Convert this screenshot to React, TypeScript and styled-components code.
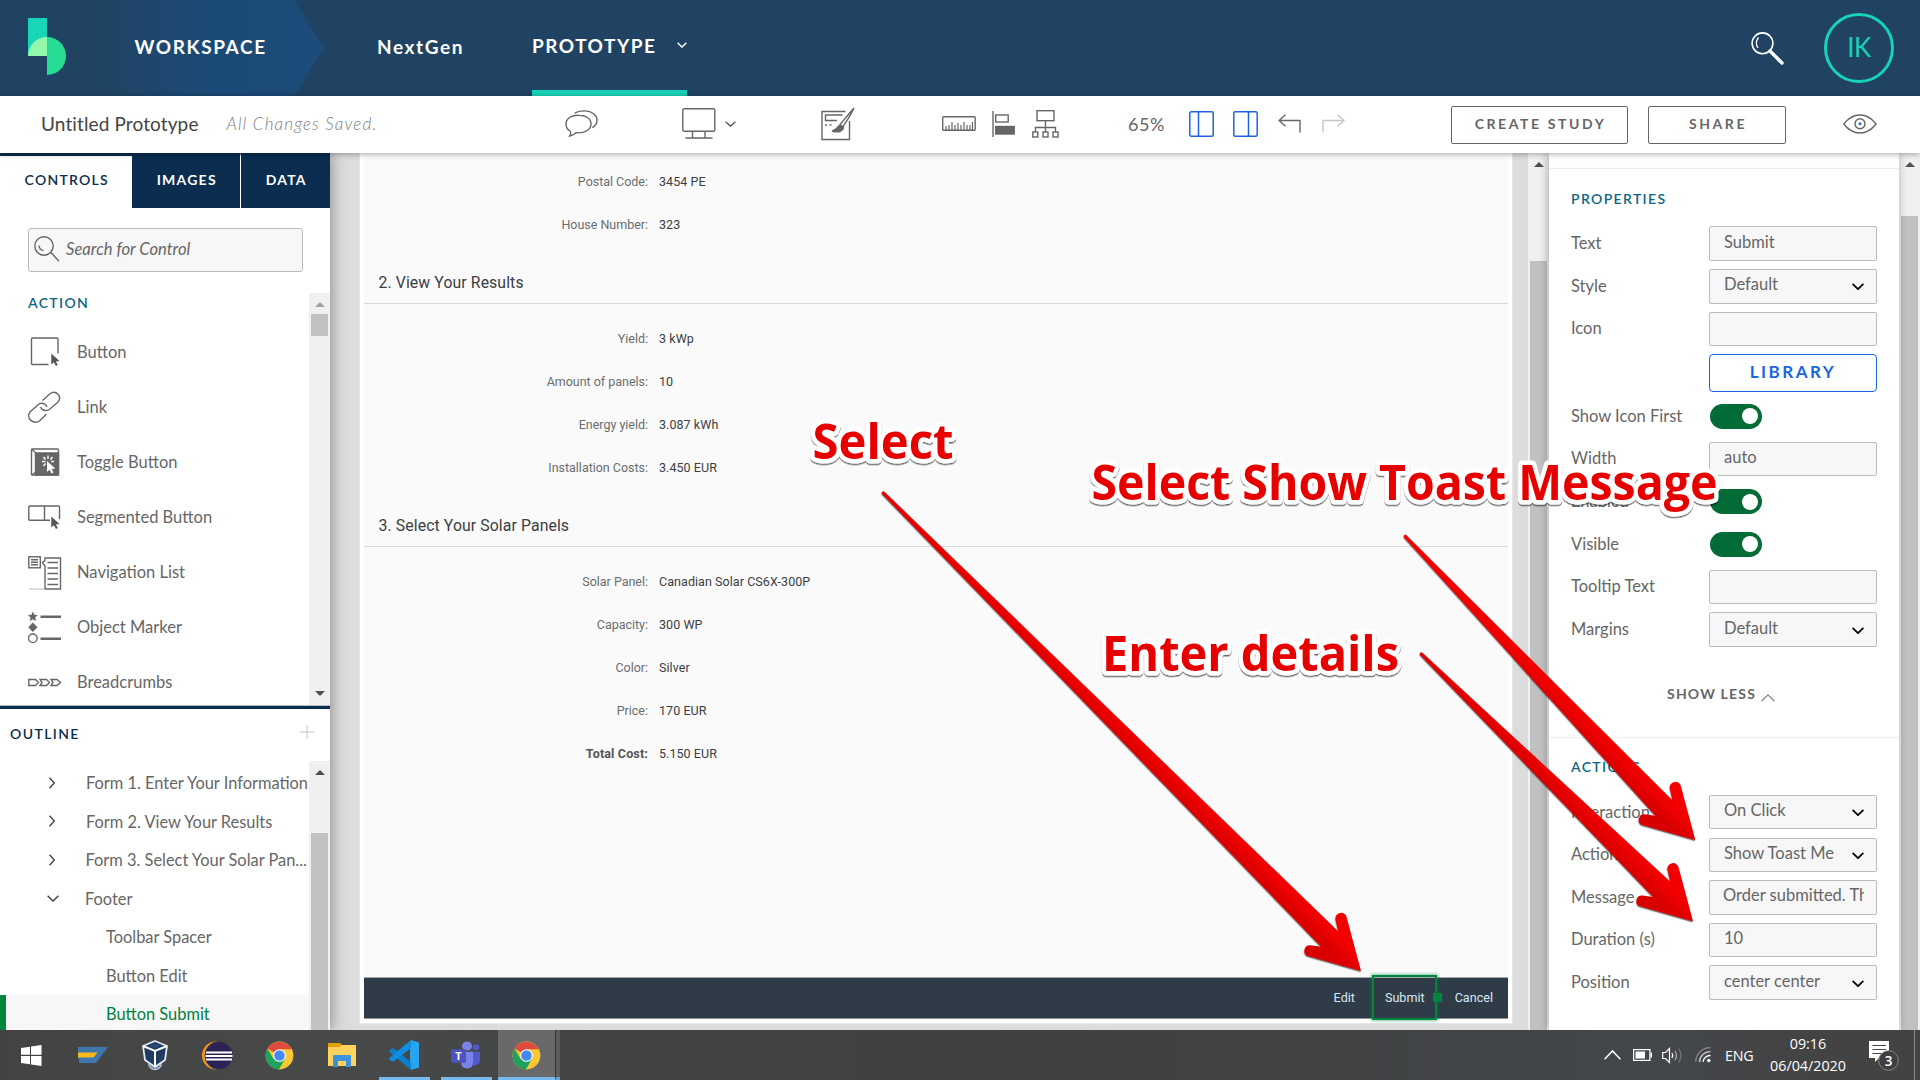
import React from 'react';
import styled, { createGlobalStyle, css } from 'styled-components';

const Global = createGlobalStyle`
  * { box-sizing: border-box; }
  html, body { margin: 0; padding: 0; overflow: hidden; }
  body { font-family: Lato, "Open Sans", sans-serif; font-size: 16.5px; color: #666; }
  svg { display: block; flex: none; }
`;

const Screen = styled.div`
  position: relative;
  width: 1920px;
  height: 1080px;
  display: flex;
  flex-direction: column;
  overflow: hidden;
  background: #fff;
`;

/* ---------- top navigation ---------- */
const Header = styled.header`
  height: 96px;
  flex: none;
  display: flex;
  background: #204363;
  color: #fff;
  font-size: 19px;
  font-weight: 700;
  letter-spacing: 1.6px;
`;
const LogoBox = styled.div`
  width: 104px;
  padding: 18px 0 0 28px;
`;
const WorkspaceTab = styled.div`
  width: 220px;
  padding: 0 0 4px 30.5px;
  display: flex;
  align-items: center;
  background: linear-gradient(90deg, #204363 0%, #1c4a76 45%, #1b4b78 100%);
  clip-path: polygon(0 0, 190px 0, 100% 50%, 190px 100%, 0 100%);
`;
const ProjectName = styled.div`
  width: 208px;
  padding: 0 0 3px 53px;
  display: flex;
  align-items: center;
`;
const PrototypeTab = styled.div`
  width: 155px;
  padding-bottom: 0;
  display: flex;
  align-items: center;
  justify-content: space-between;
  border-bottom: 6px solid #17d3b7;
  letter-spacing: 1.5px;
`;
const HeaderRight = styled.div`
  margin-left: auto;
  display: flex;
  align-items: center;
  gap: 40px;
  padding-right: 26px;
`;
const Avatar = styled.div`
  width: 70px;
  height: 70px;
  border: 3px solid #17d3b7;
  border-radius: 50%;
  color: #17d3b7;
  font-size: 26px;
  font-weight: 400;
  letter-spacing: -0.6px;
  display: flex;
  align-items: center;
  justify-content: center;
  padding-bottom: 2px;
`;

/* ---------- toolbar ---------- */
const Toolbar = styled.div`
  height: 57px;
  flex: none;
  display: flex;
  align-items: center;
  background: #fff;
  position: relative;
  z-index: 2;
  box-shadow: 0 1px 6px rgba(0, 0, 0, 0.35);
  padding: 0 0 2px 41px;
`;
const ProtoName = styled.div`
  width: 185.5px;
  font-size: 19px;
  letter-spacing: 0.12px;
  color: #444;
`;
const SaveState = styled.div`
  width: 338.5px;
  font-size: 17px;
  font-style: italic;
  font-weight: 300;
  letter-spacing: 1.15px;
  color: #808080;
`;
const Tool = styled.div<{ $gap: number }>`
  margin-right: ${(p) => p.$gap}px;
`;
const Zoom = styled.div`
  width: 61px;
  font-size: 18px;
  letter-spacing: 0.5px;
`;
const OutlineButton = styled.div<{ $w: number }>`
  width: ${(p) => p.$w}px;
  height: 38px;
  margin: 2px 20px 0 0;
  border: 1px solid #666;
  border-radius: 2px;
  display: flex;
  align-items: center;
  justify-content: center;
  padding: 0 0 3px 2px;
  font-size: 14px;
  font-weight: 700;
  letter-spacing: 2.6px;
`;
const EyeSlot = styled.div`
  padding-left: 37px;
`;

/* ---------- workspace ---------- */
const Work = styled.div`
  height: 877px;
  flex: none;
  display: flex;
  overflow: hidden;
`;
const Left = styled.aside`
  width: 330px;
  flex: none;
  display: flex;
  flex-direction: column;
  background: #fff;
  position: relative;
  z-index: 1;
  box-shadow: 1px 0 14px rgba(0, 0, 0, 0.38);
`;
const Tabs = styled.div`
  display: flex;
  height: 55px;
  flex: none;
  font-size: 14px;
  font-weight: 700;
  letter-spacing: 1.25px;
`;
const Tab = styled.div<{ $w: number; $active?: boolean }>`
  width: ${(p) => p.$w}px;
  display: flex;
  align-items: center;
  justify-content: center;
  padding: 0 0 6px 1.5px;
  border-top: 3px solid #0a2d50;
  background: ${(p) => (p.$active ? '#fff' : '#0a2d50')};
  color: ${(p) => (p.$active ? '#0a2d50' : '#fff')};
  font-weight: ${(p) => (p.$active ? 600 : 700)};
  & + & + & { border-left: 1px solid #fff; }
`;
const SearchBox = styled.div`
  margin: 20px 0 0 28px;
  width: 275px;
  height: 44px;
  flex: none;
  border: 1px solid #bbb;
  border-radius: 3px;
  background: #f7f7f7;
  display: flex;
  align-items: center;
  gap: 6px;
  padding: 0 0 2px 5px;
  font-style: italic;
  font-size: 16.6px;
`;
const ControlArea = styled.div`
  height: 433px;
  flex: none;
  display: flex;
  align-items: flex-end;
  justify-content: space-between;
  overflow: hidden;
`;
const ControlList = styled.div`
  height: 433px;
  padding: 22px 0 0 28px;
`;
const SectionTitle = styled.div`
  font-size: 14px;
  line-height: 17px;
  font-weight: 600;
  letter-spacing: 1.35px;
  color: #0b6685;
`;
const ControlItems = styled.div`
  margin-top: 13px;
`;
const ControlItem = styled.div`
  height: 55px;
  display: flex;
  align-items: center;
  line-height: 20px;
`;
const ControlIcon = styled.div`
  width: 49px;
  padding-top: 2px;
`;
const ScrollTrack = styled.div<{ $h?: number }>`
  width: 21px;
  flex: none;
  height: ${(p) => (p.$h ? `${p.$h}px` : 'auto')};
  background: #f0f0f0;
  display: flex;
  flex-direction: column;
  align-items: center;
`;
const Arrow = styled.div<{ $down?: boolean; $light?: boolean }>`
  width: 0;
  height: 0;
  margin-top: 9px;
  border-left: 5px solid transparent;
  border-right: 5px solid transparent;
  ${(p) =>
    p.$down
      ? css`border-top: 5px solid #505050; margin: auto 0 9px;`
      : css`border-bottom: 5px solid ${p.$light ? '#a3a3a3' : '#505050'};`}
`;
const Thumb = styled.div<{ $mt: number; $h: number }>`
  width: 17px;
  margin-top: ${(p) => p.$mt}px;
  height: ${(p) => p.$h}px;
  flex: none;
  background: #c1c1c1;
`;
const Outline = styled.div`
  flex: 1;
  min-height: 0;
  border-top: 1px solid #b6bcc2;
  display: flex;
  flex-direction: column;
`;
const OutlineHead = styled.div`
  height: 55px;
  flex: none;
  border-top: 3px solid #0a2d50;
  display: flex;
  justify-content: space-between;
  padding: 16px 16px 0 10px;
  font-size: 14px;
  line-height: 18px;
  font-weight: 600;
  letter-spacing: 1.4px;
  color: #0a2d50;
`;
const OutlineBody = styled.div`
  height: 269px;
  display: flex;
  overflow: hidden;
`;
const Tree = styled.div`
  width: 309px;
  padding-top: 3px;
`;
const TreeRow = styled.div<{ $indent: number; $selected?: boolean }>`
  height: 38.5px;
  display: flex;
  align-items: center;
  white-space: nowrap;
  font-size: 16.4px;
  border-left: 6px solid ${(p) => (p.$selected ? '#00853f' : 'transparent')};
  background: ${(p) => (p.$selected ? '#f7f7f7' : 'none')};
  color: ${(p) => (p.$selected ? '#00803c' : '#666')};
  padding: 0 0 ${(p) => (p.$selected ? 1.5 : 0.8)}px ${(p) => p.$indent}px;
`;
const Twisty = styled.div`
  width: 38px;
  display: flex;
`;

/* ---------- canvas ---------- */
const Canvas = styled.main`
  width: 1198px;
  flex: none;
  background: #dcdcdc;
  padding-left: 30px;
`;
const Page = styled.div`
  width: 1152px;
  height: 870px;
  background: #fff;
  padding: 0 4px 0 4px;
  box-shadow: 0 0 2px rgba(255, 255, 255, 0.9);
  font-family: Roboto, "Liberation Sans", sans-serif;
`;
const PageBody = styled.div`
  height: 823.5px;
  background: #fafafa;
  padding-top: 7.2px;
`;
const FieldGroup = styled.div<{ $first?: boolean }>`
  padding-top: ${(p) => (p.$first ? 0 : 13.2)}px;
`;
const Field = styled.div`
  height: 43px;
  display: flex;
  align-items: center;
  gap: 11px;
  font-size: 12.5px;
`;
const FieldLabel = styled.div<{ $strong?: boolean }>`
  width: 284px;
  text-align: right;
  letter-spacing: ${(p) => (p.$strong ? 0.15 : -0.02)}px;
  font-weight: ${(p) => (p.$strong ? 700 : 400)};
  color: ${(p) => (p.$strong ? '#555' : '#6a6d70')};
`;
const FieldValue = styled.div`
  letter-spacing: 0.06px;
  color: #3a3e42;
`;
const FormHeading = styled.div`
  height: 57.8px;
  border-bottom: 1px solid #d9d9d9;
  padding: 27px 0 0 14.5px;
  font-size: 15.8px;
  line-height: 19px;
  letter-spacing: 0.1px;
  color: #3a3e42;
`;
const PageFooter = styled.div`
  height: 42.5px;
  background: #2f3b47;
  border-top: 1px solid #a5aab0;
  border-bottom: 1px solid #8a9199;
  display: flex;
  align-items: center;
  justify-content: flex-end;
  font-size: 12.6px;
  color: #d6e8f7;
  padding-right: 15px;
  gap: 30px;
`;
const Selection = styled.div`
  position: relative;
  &::before {
    content: '';
    position: absolute;
    inset: -15px -12px -15px -13px;
    border: 2px solid #00853f;
    box-shadow: 0 0 3px 1px rgba(0, 150, 80, 0.5);
  }
  &::after {
    content: '';
    position: absolute;
    right: -17px;
    top: 3px;
    width: 9px;
    height: 9px;
    background: #00853f;
  }
`;

/* ---------- properties ---------- */
const Right = styled.aside`
  width: 350px;
  flex: none;
  background: #fff;
  padding: 15px 0 0;
  position: relative;
  z-index: 1;
  box-shadow: -1px 0 9px rgba(0, 0, 0, 0.3);
`;
const PropSection = styled.section<{ $h: number; $top: number }>`
  height: ${(p) => p.$h}px;
  border-top: 1px solid #eee;
  padding: ${(p) => p.$top}px 22px 0 22px;
`;
const PropRows = styled.div<{ $mt: number }>`
  margin-top: ${(p) => p.$mt}px;
`;
const PropRow = styled.div<{ $tall?: boolean }>`
  height: ${(p) => (p.$tall ? 44.9 : 42.62)}px;
  display: flex;
  align-items: flex-start;
`;
const PropLabel = styled.div`
  width: 138px;
  height: 33.2px;
  display: flex;
  align-items: center;
`;
const InputBox = styled.div`
  width: 168px;
  height: 34.5px;
  border: 1px solid #bbb;
  border-radius: 2px;
  background: #f7f7f7;
  display: flex;
  align-items: center;
  justify-content: space-between;
  padding: 0 12px 4px 14px;
  white-space: nowrap;
`;
const SelectArrow = styled.span`
  padding-top: 5px;
`;
const Clip = styled.span`
  overflow: hidden;
  width: 141px;
  margin-left: -1px;
`;
const LibraryButton = styled.div`
  width: 168px;
  height: 38px;
  border: 1px solid #1a66e0;
  border-radius: 4px;
  display: flex;
  align-items: center;
  justify-content: center;
  padding-bottom: 4px;
  color: #1a66e0;
  font-weight: 700;
  font-size: 17px;
  letter-spacing: 2.5px;
`;
const Toggle = styled.div`
  width: 52px;
  height: 24.5px;
  margin: 5px 0 0 1px;
  border-radius: 13px;
  background: #036b35;
  display: flex;
  align-items: center;
  justify-content: flex-end;
  padding-right: 4px;
  &::after {
    content: '';
    width: 16px;
    height: 16px;
    border-radius: 50%;
    background: #fff;
  }
`;
const ShowLess = styled.div`
  margin-top: 29px;
  display: flex;
  align-items: center;
  gap: 5px;
  padding-left: 96px;
  font-size: 14px;
  line-height: 20px;
  font-weight: 700;
  letter-spacing: 1.2px;
  svg { margin-top: 9px; }
`;

/* ---------- taskbar ---------- */
const Taskbar = styled.footer`
  height: 50px;
  flex: none;
  display: flex;
  position: relative;
  z-index: 3;
  background: linear-gradient(90deg, #434343 0%, #484a4a 17%, #434343 32%, #3f4041 55%, #424547 78%, #43474c 86%, #434343 95%);
  font-family: "Open Sans", "Noto Sans", sans-serif;
  font-size: 14.3px;
  color: #fff;
`;
const Apps = styled.div`
  display: flex;
`;
const AppButton = styled.div<{ $open?: boolean; $active?: boolean }>`
  width: ${(p) => (p.$active ? 57 : 62.2)}px;
  margin-left: ${(p) => (p.$active ? 0.4 : 0)}px;
  display: flex;
  align-items: center;
  justify-content: center;
  background: ${(p) =>
    p.$open
      ? `linear-gradient(#76b9ed, #76b9ed) center bottom / ${p.$active ? '100%' : '51px'} 3px no-repeat ${p.$active ? ', #696969' : ''}`
      : 'none'};
`;
const StackEdge = styled.div`
  width: 5px;
  border-left: 1px solid #333;
  border-bottom: 3px solid #679fca;
  background: #5b5b5b;
`;
const Tray = styled.div`
  margin-left: auto;
  display: flex;
  align-items: center;
`;
const TrayItem = styled.div<{ $w: number }>`
  width: ${(p) => p.$w}px;
  display: flex;
  letter-spacing: -0.2px;
`;
const Clock = styled.div`
  width: 99px;
  text-align: center;
  line-height: 22.5px;
  padding: 0 7px 0 0;
`;
const DesktopEdge = styled.div`
  width: 6px;
  height: 50px;
  border-left: 1px solid #8a8a8a;
`;

const Overlay = styled.svg`
  position: absolute;
  left: 0;
  top: 0;
  z-index: 4;
  pointer-events: none;
`;

/* ---------- icons ---------- */
const line = { fill: 'none', stroke: '#666', strokeWidth: 1.4 } as const;

const Logo = () => (
  <svg width="38" height="58" viewBox="0 0 38 58">
    <path d="M1 0H19V38H0V1Q0 0 1 0Z" fill="#17d6b8" />
    <path d="M19 19A19 19 0 0 1 19 57Z" fill="#26dc92" />
    <path d="M0 38A19 19 0 0 1 19 19V38Z" fill="#93f8ab" />
  </svg>
);
const Chevron = ({ w = 11, h = 6, color = '#000', sw = 1.6, up = false }: { w?: number; h?: number; color?: string; sw?: number; up?: boolean }) => (
  <svg width={w} height={h} viewBox={`0 0 ${w} ${h}`}>
    <path d={up ? `M.5 ${h - 0.7}L${w / 2} .9L${w - 0.5} ${h - 0.7}` : `M.6 .8L${w / 2} ${h - 0.9}L${w - 0.6} .8`} fill="none" stroke={color} strokeWidth={sw} />
  </svg>
);
const HeaderSearch = () => (
  <svg width="33" height="33" viewBox="0 0 33 33" fill="none" stroke="#fff">
    <circle cx="11.5" cy="11.3" r="10.4" strokeWidth="1.6" />
    <path d="M7.5 5.5Q3.5 11 7 16" strokeWidth="1.3" />
    <path d="M19 19L31 31" strokeWidth="3.4" strokeLinecap="round" />
  </svg>
);
const PanelSearch = () => (
  <svg width="26" height="26" viewBox="0 0 26 26" {...line}>
    <circle cx="10" cy="10" r="9.2" />
    <path d="M5 9.5Q5.5 14 9.5 14.5M17 16.5L25 25.3" />
  </svg>
);
const Chat = () => (
  <svg width="33" height="27" viewBox="0 0 33 27" {...line}>
    <path d="M13.500 5.200C6.500 5 1 8.500 1 14C1 17.500 3 20 5.500 21.500C6 23.500 5.500 25 4.800 26C7.500 25.500 9.500 24.500 11 22.800C20 23.500 26 19.500 26 14C26 8.500 21 5.200 13.500 5.200Z" />
    <path d="M9.800 3.400C12 1.700 16 .8 20 .9C27 1.200 32 5 32 10C32 13.500 30.500 16 27.300 17.500" />
  </svg>
);
const Monitor = () => (
  <svg width="34" height="31" viewBox="0 0 34 31" {...line}>
    <rect x=".8" y=".8" width="32" height="22.500" rx="1.500" />
    <path d="M10.500 23.500V29.500M23 23.500V29.500M3.500 30H30.500" />
  </svg>
);
const Design = () => (
  <svg width="34" height="34" viewBox="0 0 34 34" {...line}>
    <path d="M24.500 4.500H1V32.500H28.500V14" />
    <path d="M21.500 8H4.500V13.500H16M4 18H6M8.500 18H10.500" />
    <path d="M33 1L19 17.500L21.500 20.500C25 15 30 8 33 1Z" fill="#fff" />
    <path d="M20 18.500C16 18 16.500 23 11 24C17 26 22 24.500 22.500 20.500Z" fill="#666" />
  </svg>
);
const Ruler = () => (
  <svg width="34" height="15" viewBox="0 0 34 15" {...line}>
    <rect x=".7" y=".7" width="32.500" height="13.500" rx="1" />
    <path d="M4 14V10M7 14V9M10 14V6M13 14V9M16 14V7M19 14V9M22 14V6M25 14V9M28 14V9M30.500 14V6" strokeWidth="1.200" />
  </svg>
);
const Align = () => (
  <svg width="23" height="26" viewBox="0 0 23 26" {...line}>
    <path d="M1 0V26" />
    <rect x="3.700" y="4" width="12.500" height="7" />
    <rect x="3.700" y="15.500" width="18.500" height="7.500" fill="#666" />
  </svg>
);
const Hierarchy = () => (
  <svg width="27" height="28" viewBox="0 0 27 28" {...line}>
    <rect x="5" y=".7" width="17" height="10" />
    <path d="M13.500 11V22M3.500 22V17.500H23.500V22" />
    <rect x=".8" y="22" width="5" height="5" /><rect x="11" y="22" width="5" height="5" /><rect x="21" y="22" width="5" height="5" />
  </svg>
);
const PanelToggle = ({ right = false }: { right?: boolean }) => (
  <svg width="25" height="26" viewBox="0 0 25 26" fill="none" stroke="#1a66e0" strokeWidth="1.500">
    <rect x=".8" y=".8" width="23.400" height="24.400" rx="1.500" />
    <path d={right ? 'M15.500 1V25' : 'M9.500 1V25'} />
  </svg>
);
const Undo = ({ flip = false }: { flip?: boolean }) => (
  <svg width="23" height="19" viewBox="0 0 23 19" fill="none" stroke={flip ? '#c6c6c6' : '#666'} strokeWidth="1.400">
    <path d={flip ? 'M1 18.500V6.500H22M15.500 .8L22 6.500L15.500 12.300' : 'M22 18.500V6.500H1M7.500 .8L1 6.500L7.500 12.300'} />
  </svg>
);
const Eye = () => (
  <svg width="34" height="20" viewBox="0 0 34 20" {...line}>
    <path d="M.8 10C10 -2 24 -2 33 10C24 22 10 22 .8 10Z" />
    <circle cx="17" cy="9.800" r="5" />
    <circle cx="17" cy="9.800" r="1.500" fill="#2d6fd0" stroke="none" />
  </svg>
);
const pointer = 'M0 0V11L2.600 8.700L4.600 12.500L6.500 11.600L4.600 7.900L8.200 7.600Z';

const controlIcons: Record<string, React.ReactNode> = {
  Button: (
    <>
      <path d="M20.500 28.500H4.500Q3.500 28.500 3.500 27.500V3.300Q3.500 2 4.500 2H29Q30 2 30 3.300V17.500" />
      <path d={pointer} transform="translate(23.300 17.500)" fill="#555" stroke="none" />
    </>
  ),
  Link: (
    <>
      <path d="M14.500 9.500L22 2.800C28 -1.500 34.500 5.500 30 11L22 18C18 21 13.500 19 12.500 16" />
      <path d="M18.500 23L12 29.500C5.500 34.500 -2.500 27 2 21L10 13.700C13.500 11 18 12.500 19 16" />
    </>
  ),
  'Toggle Button': (
    <>
      <rect x="3.500" y="3" width="27" height="26" rx="1" />
      <path d="M3.500 3L8 7V26L3.500 29" />
      <path d="M7.500 7H30.500V29H7.500Z" fill="#666" />
      <path d="M20 9.500V13M15.500 11L17.500 13.500M24.500 11L22.500 13.500M14 15.500H17.500M23 15.500H26M15.500 20L17.500 17.500" stroke="#fff" />
      <path d={pointer} transform="translate(19 15)" fill="#fff" stroke="none" />
    </>
  ),
  'Segmented Button': (
    <>
      <path d="M22 19.300H1.800Q.8 19.300 .8 18.300V6Q.8 5 1.800 5H30.500Q31.500 5 31.500 6V18M16.500 5V19" />
      <path d={pointer} transform="translate(23.300 15.500)" fill="#555" stroke="none" />
    </>
  ),
  'Navigation List': (
    <>
      <rect x=".8" y=".8" width="11.500" height="11" />
      <path d="M3 3.800H10M3 6.300H10M3 8.800H10" />
      <path d="M17 33V10L14.500 6.500L17 4.500V2H32.500V33Z" />
      <path d="M19.500 6.500H30M19.500 12H30M19.500 17.500H30M19.500 23H30M19.500 28.500H30" />
      <path d="M1 33H17" stroke="#bbb" strokeWidth="1" />
    </>
  ),
  'Object Marker': (
    <>
      <path d="M4.800 .5L6.300 3.700L9.800 4.100L7.200 6.500L8 10L4.800 8.200L1.700 10L2.500 6.500L0 4.100L3.400 3.700Z" fill="#666" stroke="none" />
      <path d="M4.800 11.500L9.500 16.200L4.800 21L.2 16.200Z" fill="#666" stroke="none" />
      <circle cx="4.800" cy="27.300" r="4.300" />
      <path d="M12.500 5.800H33M12.500 27.800H33" strokeWidth="2.600" />
    </>
  ),
  Breadcrumbs: (
    <>
      <path d="M.8 13.500H7.500L10.500 16.500L7.500 19.500H.8Z" />
      <path d="M12 13.500H18.500L21.500 16.500L18.500 19.500H12L14 16.500Z" />
      <path d="M23 13.500H29L32.500 16.500L29 19.500H23L25 16.500Z" />
    </>
  ),
};
const controls = Object.keys(controlIcons);

const Chrome = () => (
  <svg width="29" height="29" viewBox="0 0 48 48">
    <circle cx="24" cy="24" r="23" fill="#fbc834" />
    <path d="M24 24L4 12.500A23 23 0 0 1 44 13.500H24Z" fill="#dd4b3e" />
    <path d="M4 12.500A23 23 0 0 0 23 47L33.500 29L24 24L14.500 30Z" fill="#1da35c" />
    <circle cx="24" cy="24" r="10.500" fill="#fff" />
    <circle cx="24" cy="24" r="8.700" fill="#4688f4" />
  </svg>
);
const appIcons: React.ReactNode[] = [
  <svg width="21" height="21" viewBox="0 0 21 21" fill="#fff">
    <path d="M0 3L9 1.700V9.800H0ZM10 1.500L20.500 0V9.800H10ZM0 11H9V19.200L0 18ZM10 11H20.500V21L10 19.400Z" />
  </svg>,
  <svg width="30" height="16" viewBox="0 0 30 16">
    <path d="M0 0H30L18 16H1V12H0Z" fill="#3f76ad" />
    <path d="M0 5.500H19.500L15.500 10.500H0Z" fill="#fbb81c" />
  </svg>,
  <svg width="26" height="30" viewBox="0 0 26 30">
    <path d="M7 23C6 27 9 29.500 13 29.500S20 27 19 23Z" fill="#7a8fb5" stroke="#dfe6f0" strokeWidth="1" />
    <path d="M13 1L25 6L23 20L13 27L3 20L1 6Z" fill="#1f3a63" stroke="#e3e9f1" strokeWidth="1.800" />
    <path d="M1 6L13 11L25 6M13 11V27" fill="none" stroke="#fff" strokeWidth="2" />
    <path d="M7 6L13 3.500L19 6L13 8.300Z" fill="#2a4a7a" />
  </svg>,
  <svg width="31" height="29" viewBox="0 0 31 29">
    <circle cx="14" cy="14.500" r="14" fill="#f7941e" />
    <circle cx="17" cy="14.500" r="14" fill="#2c2255" stroke="#434343" strokeWidth="1" />
    <path d="M4 11.500H30M3.500 15H30.500M4 18.500H30" stroke="#fff" strokeWidth="2" />
  </svg>,
  <Chrome />,
  <svg width="28" height="24" viewBox="0 0 28 24">
    <path d="M0 1Q0 0 1 0H12L13.500 2H28V23H0Z" fill="#ffd35c" />
    <path d="M0 1Q0 0 1 0H12L13.500 2L12 4H0Z" fill="#e0a100" />
    <path d="M5 24V13Q5 12 6 12H22Q23 12 23 13V24H18V18H10V24Z" fill="#3a93dc" />
  </svg>,
  <svg width="30" height="30" viewBox="0 0 30 35" preserveAspectRatio="none">
    <path d="M22 0L30 3V32L22 35L21 26V9Z" fill="#28a4ee" />
    <path d="M22 26V35L1 14.500L0 12.500L3 9.800L5 10Z" fill="#0a7fcd" />
    <path d="M22 0V9.500L5 24.500L3 25L0 22.500L1 20.500Z" fill="#0f8fe0" />
  </svg>,
  <svg width="30" height="28" viewBox="0 0 30 31" preserveAspectRatio="none">
    <circle cx="16" cy="5.500" r="5" fill="#7b83eb" />
    <circle cx="25" cy="7" r="3.300" fill="#5059c9" />
    <path d="M20 12H29V21Q29 27 23 27H20Z" fill="#5059c9" />
    <path d="M10 12H22V23Q22 30.500 16 30.500T10 23Z" fill="#7b83eb" />
    <rect y="9" width="15" height="15" rx="1.500" fill="#4b53bc" />
    <text x="7.500" y="20.500" textAnchor="middle" fontFamily="Open Sans, sans-serif" fontWeight="700" fontSize="11" fill="#fff">T</text>
  </svg>,
];

/* ---------- data ---------- */
type FieldRow = { label: string; value: string; strong?: boolean };
const address: FieldRow[] = [
  { label: 'Postal Code:', value: '3454 PE' },
  { label: 'House Number:', value: '323' },
];
const results: FieldRow[] = [
  { label: 'Yield:', value: '3 kWp' },
  { label: 'Amount of panels:', value: '10' },
  { label: 'Energy yield:', value: '3.087 kWh' },
  { label: 'Installation Costs:', value: '3.450 EUR' },
];
const panels: FieldRow[] = [
  { label: 'Solar Panel:', value: 'Canadian Solar CS6X-300P' },
  { label: 'Capacity:', value: '300 WP' },
  { label: 'Color:', value: 'Silver' },
  { label: 'Price:', value: '170 EUR' },
  { label: 'Total Cost:', value: '5.150 EUR', strong: true },
];

const Fields = ({ rows }: { rows: FieldRow[] }) => (
  <>
    {rows.map((r) => (
      <Field key={r.label}>
        <FieldLabel $strong={r.strong}>{r.label}</FieldLabel>
        <FieldValue>{r.value}</FieldValue>
      </Field>
    ))}
  </>
);

type Prop = { label: string; kind: 'text' | 'select' | 'toggle' | 'library'; value?: string };
const properties: Prop[] = [
  { label: 'Text', kind: 'text', value: 'Submit' },
  { label: 'Style', kind: 'select', value: 'Default' },
  { label: 'Icon', kind: 'text' },
  { label: '', kind: 'library' },
  { label: 'Show Icon First', kind: 'toggle' },
  { label: 'Width', kind: 'text', value: 'auto' },
  { label: 'Enabled', kind: 'toggle' },
  { label: 'Visible', kind: 'toggle' },
  { label: 'Tooltip Text', kind: 'text' },
  { label: 'Margins', kind: 'select', value: 'Default' },
];
const actions: Prop[] = [
  { label: 'Interaction', kind: 'select', value: 'On Click' },
  { label: 'Action', kind: 'select', value: 'Show Toast Me' },
  { label: 'Message', kind: 'text', value: 'Order submitted. Th' },
  { label: 'Duration (s)', kind: 'text', value: '10' },
  { label: 'Position', kind: 'select', value: 'center center' },
];
const PropList = ({ items, mt }: { items: Prop[]; mt: number }) => (
  <PropRows $mt={mt}>
    {items.map((p, i) => (
      <PropRow key={i} $tall={p.kind === 'library'}>
        <PropLabel>{p.label}</PropLabel>
        {p.kind === 'toggle' && <Toggle />}
        {p.kind === 'library' && <LibraryButton>LIBRARY</LibraryButton>}
        {p.kind === 'text' && <InputBox>{p.label === 'Message' ? <Clip>{p.value}</Clip> : p.value}</InputBox>}
        {p.kind === 'select' && <InputBox>{p.value}<SelectArrow><Chevron w={12} h={7} sw={1.8} /></SelectArrow></InputBox>}
      </PropRow>
    ))}
  </PropRows>
);

const tree: { text: string; indent: number; open?: boolean; leaf?: boolean; selected?: boolean }[] = [
  { text: 'Form 1. Enter Your Information', indent: 42 },
  { text: 'Form 2. View Your Results', indent: 42 },
  { text: 'Form 3. Select Your Solar Pan...', indent: 41.5 },
  { text: 'Footer', indent: 41, open: true },
  { text: 'Toolbar Spacer', indent: 100, leaf: true },
  { text: 'Button Edit', indent: 100, leaf: true },
  { text: 'Button Submit', indent: 100, leaf: true, selected: true },
];

const arrows = [
  { from: [883.5, 493], to: [1361, 971] },
  { from: [1405.5, 536.5], to: [1695.3, 840] },
  { from: [1421.5, 654], to: [1693, 921.3] },
];
const arrowPath = ([tx, ty]: number[]) =>
  `M0 0L-14.300 -53.500A5.600 5.600 0 0 0 -25.500 -51.500L-22.800 -39.800L${tx + 1} ${ty - 1.3}A1.500 1.500 0 0 0 ${tx - 1.3} ${ty + 1}L-39.800 -24.300L-50.500 -25.800A5.600 5.600 0 0 0 -53 -15Z`;

const notes = [
  { text: 'Select', x: 812.5, y: 459, w: 141 },
  { text: 'Select Show Toast Message', x: 1091.5, y: 500, w: 626 },
  { text: 'Enter details', x: 1102, y: 671, w: 297 },
];

export default function App() {
  return (
    <Screen>
      <Global />
      <Header>
        <LogoBox><Logo /></LogoBox>
        <WorkspaceTab>WORKSPACE</WorkspaceTab>
        <ProjectName>NextGen</ProjectName>
        <PrototypeTab>PROTOTYPE<Chevron w={10} h={6} color="#fff" sw={1.4} /></PrototypeTab>
        <HeaderRight><HeaderSearch /><Avatar>IK</Avatar></HeaderRight>
      </Header>
      <Toolbar>
        <ProtoName>Untitled Prototype</ProtoName>
        <SaveState>All Changes Saved.</SaveState>
        <Tool $gap={84}><Chat /></Tool>
        <Tool $gap={9}><Monitor /></Tool>
        <Tool $gap={85}><Chevron w={11} h={6} color="#555" sw={1.3} /></Tool>
        <Tool $gap={87}><Design /></Tool>
        <Tool $gap={16}><Ruler /></Tool>
        <Tool $gap={17}><Align /></Tool>
        <Tool $gap={69}><Hierarchy /></Tool>
        <Zoom>65%</Zoom>
        <Tool $gap={19}><PanelToggle /></Tool>
        <Tool $gap={20}><PanelToggle right /></Tool>
        <Tool $gap={21}><Undo /></Tool>
        <Tool $gap={106}><Undo flip /></Tool>
        <OutlineButton $w={177}>CREATE STUDY</OutlineButton>
        <OutlineButton $w={138}>SHARE</OutlineButton>
        <EyeSlot><Eye /></EyeSlot>
      </Toolbar>
      <Work>
        <Left>
          <Tabs>
            <Tab $w={132} $active>CONTROLS</Tab>
            <Tab $w={108}>IMAGES</Tab>
            <Tab $w={90}>DATA</Tab>
          </Tabs>
          <SearchBox><PanelSearch />Search for Control</SearchBox>
          <ControlArea>
            <ControlList>
              <SectionTitle>ACTION</SectionTitle>
              <ControlItems>
                {controls.map((name) => (
                  <ControlItem key={name}>
                    <ControlIcon><svg width="34" height="34" viewBox="0 0 34 34" {...line}>{controlIcons[name]}</svg></ControlIcon>
                    {name}
                  </ControlItem>
                ))}
              </ControlItems>
            </ControlList>
            <ScrollTrack $h={412}>
              <Arrow $light />
              <Thumb $mt={7} $h={22} />
              <Arrow $down />
            </ScrollTrack>
          </ControlArea>
          <Outline>
            <OutlineHead>
              OUTLINE
              <svg width="14" height="14" viewBox="0 0 14 14"><path d="M7 0V14M0 7H14" stroke="#c4c4c4" /></svg>
            </OutlineHead>
            <OutlineBody>
              <Tree>
                {tree.map((t) => (
                  <TreeRow key={t.text} $indent={t.indent} $selected={t.selected}>
                    {!t.leaf && (
                      <Twisty>
                        {t.open ? (
                          <Chevron w={12} h={7} color="#444" sw={1.4} />
                        ) : (
                          <svg width="8" height="12" viewBox="0 0 8 12"><path d="M1.500 .7L6.300 6L1.500 11.300" fill="none" stroke="#444" strokeWidth="1.400" /></svg>
                        )}
                      </Twisty>
                    )}
                    {t.text}
                  </TreeRow>
                ))}
              </Tree>
              <ScrollTrack>
                <Arrow />
                <Thumb $mt={58} $h={240} />
              </ScrollTrack>
            </OutlineBody>
          </Outline>
        </Left>
        <Canvas>
          <Page>
            <PageBody>
              <FieldGroup $first><Fields rows={address} /></FieldGroup>
              <FormHeading>2. View Your Results</FormHeading>
              <FieldGroup><Fields rows={results} /></FieldGroup>
              <FormHeading>3. Select Your Solar Panels</FormHeading>
              <FieldGroup><Fields rows={panels} /></FieldGroup>
            </PageBody>
            <PageFooter>
              <span>Edit</span>
              <Selection>Submit</Selection>
              <span>Cancel</span>
            </PageFooter>
          </Page>
        </Canvas>
        <ScrollTrack $h={877}>
          <Arrow />
          <Thumb $mt={94} $h={769} />
        </ScrollTrack>
        <Right>
          <PropSection $h={569} $top={20.7}>
            <SectionTitle>PROPERTIES</SectionTitle>
            <PropList items={properties} mt={19.8} />
            <ShowLess>SHOW LESS<Chevron up w={14} h={8} color="#888" sw={1.3} /></ShowLess>
          </PropSection>
          <PropSection $h={292} $top={19.7}>
            <SectionTitle>ACTIONS</SectionTitle>
            <PropList items={actions} mt={20.3} />
          </PropSection>
        </Right>
        <ScrollTrack $h={877}>
          <Arrow />
          <Thumb $mt={49} $h={814} />
        </ScrollTrack>
      </Work>
      <Taskbar>
        <Apps>
          {appIcons.map((icon, i) => (
            <AppButton key={i} $open={i > 5}>{icon}</AppButton>
          ))}
          <AppButton $open $active><Chrome /></AppButton>
          <StackEdge />
        </Apps>
        <Tray>
          <TrayItem $w={29}>
            <Chevron up w={17} h={10} color="#fff" sw={1.5} />
          </TrayItem>
          <TrayItem $w={29}>
            <svg width="19" height="12" viewBox="0 0 19 12"><rect x=".6" y=".6" width="16.300" height="10.800" fill="none" stroke="#fff" strokeWidth="1.200" /><rect x="2.500" y="2.500" width="9.500" height="7" fill="#fff" /><rect x="17.500" y="3.500" width="1.500" height="5" fill="#fff" /></svg>
          </TrayItem>
          <TrayItem $w={33}>
            <svg width="21" height="17" viewBox="0 0 21 17" fill="none" stroke="#fff" strokeWidth="1.200"><path d="M.7 5.500H3.500L7.500 1.500V15.500L3.500 11.500H.7Z" /><path d="M10 6Q11.500 8.500 10 11" /><path d="M13 4Q16 8.500 13 13" stroke="#aaa" /><path d="M16.500 1.500Q21.500 8.500 16.500 15.500" stroke="#777" /></svg>
          </TrayItem>
          <TrayItem $w={30}>
            <svg width="16" height="16" viewBox="0 0 16 16" fill="none" strokeWidth="1.300"><path d="M.7 15A14.500 14.500 0 0 1 15.500 .7" stroke="#888" /><path d="M4.500 15A10.500 10.500 0 0 1 15.500 4.700" stroke="#ccc" /><path d="M8 15A7 7 0 0 1 15.500 8.500" stroke="#fff" /><circle cx="13.800" cy="13.500" r="1.700" fill="#fff" /></svg>
          </TrayItem>
          <TrayItem $w={37}>ENG</TrayItem>
          <Clock>09:16<br />06/04/2020</Clock>
          <TrayItem $w={53}>
            <svg width="40" height="34" viewBox="0 0 40 34"><path d="M8 3H28V20H18L14 24V20H8Z" fill="#fff" /><path d="M11.500 7.500H25M11.500 11.500H25M11.500 15.500H20" stroke="#444" strokeWidth="1.200" /><circle cx="27.500" cy="22.500" r="9.800" fill="#3f3f3f" stroke="#888" /><text x="27.500" y="27.500" textAnchor="middle" fill="#fff" fontFamily="Open Sans, sans-serif" fontWeight="600" fontSize="13.500">3</text></svg>
          </TrayItem>
          <DesktopEdge />
        </Tray>
      </Taskbar>
      <Overlay width="1920" height="1080" viewBox="0 0 1920 1080">
        <defs>
          <linearGradient id="arrowRed" gradientUnits="userSpaceOnUse" x1="-16" y1="-44" x2="-44" y2="-16">
            <stop offset="0.300" stopColor="#f20303" />
            <stop offset="0.700" stopColor="#d90000" />
          </linearGradient>
          <filter id="noteShadow" x="-5%" y="-20%" width="110%" height="150%">
            <feDropShadow dx="0" dy="1.500" stdDeviation="0.700" floodColor="#000" floodOpacity="0.600" />
          </filter>
          <filter id="arrowShadow" x="-5%" y="-5%" width="110%" height="110%">
            <feDropShadow dx="-0.300" dy="1.200" stdDeviation="0.700" floodColor="#000" floodOpacity="0.600" />
          </filter>
        </defs>
        {arrows.map((a, i) => (
          <path
            key={i}
            transform={`translate(${a.to[0]} ${a.to[1]})`}
            d={arrowPath([a.from[0] - a.to[0], a.from[1] - a.to[1]])}
            fill="url(#arrowRed)"
            filter="url(#arrowShadow)"
          />
        ))}
        {notes.map((n) => (
          <text
            key={n.text}
            x={n.x}
            y={n.y}
            textLength={n.w}
            lengthAdjust="spacingAndGlyphs"
            fontFamily="Open Sans, Noto Sans, sans-serif"
            fontWeight="700"
            fontSize="48"
            fill="#e60000"
            stroke="#fff"
            strokeWidth="9"
            strokeLinejoin="round"
            paintOrder="stroke"
            filter="url(#noteShadow)"
          >
            {n.text}
          </text>
        ))}
      </Overlay>
    </Screen>
  );
}
